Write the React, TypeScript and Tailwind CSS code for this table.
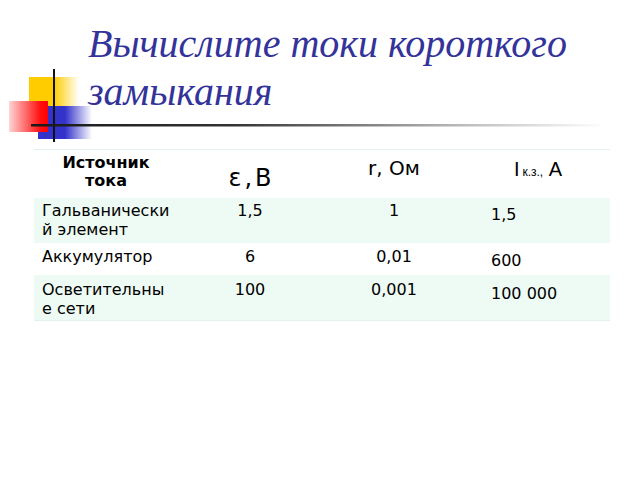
import React from 'react';

const rows = [
  { name: ['Гальванически', 'й элемент'], e: '1,5', r: '1', i: '1,5', h: 'h-[45px]', pt: 'pt-[3px]', pt4: 'pt-[7px]', bg: 'bg-[#eefbf4]' },
  { name: ['Аккумулятор'], e: '6', r: '0,01', i: '600', h: 'h-[32px]', pt: 'pt-[4px]', pt4: 'pt-[8px]', bg: 'bg-white' },
  { name: ['Осветительны', 'е сети'], e: '100', r: '0,001', i: '100 000', h: 'h-[45px]', pt: 'pt-[5px]', pt4: 'pt-[9px]', bg: 'bg-[#eefbf4]' },
];

function Decoration() {
  return (
    <svg className="absolute left-0 top-0" width="640" height="150" viewBox="0 0 640 150">
      <defs>
        <linearGradient id="yel" x1="0" x2="1" y1="0" y2="0">
          <stop offset="0" stopColor="#ffcc00" />
          <stop offset="0.5" stopColor="#ffcc00" />
          <stop offset="1" stopColor="#ffffff" />
        </linearGradient>
        <linearGradient id="red" x1="0" x2="1" y1="0" y2="0">
          <stop offset="0" stopColor="#ffd4d4" />
          <stop offset="0.8" stopColor="#ff1010" />
          <stop offset="1" stopColor="#ff0000" />
        </linearGradient>
        <linearGradient id="blu" x1="0" x2="1" y1="0" y2="0">
          <stop offset="0" stopColor="#3333cc" />
          <stop offset="0.5" stopColor="#3333cc" />
          <stop offset="1" stopColor="#ffffff" />
        </linearGradient>
        <linearGradient id="ln" x1="0" x2="1" y1="0" y2="0">
          <stop offset="0" stopColor="#1a1a1a" />
          <stop offset="0.35" stopColor="#333333" />
          <stop offset="0.75" stopColor="#bbbbbb" />
          <stop offset="1" stopColor="#ffffff" />
        </linearGradient>
      </defs>
      <rect x="29" y="77" width="50" height="30" fill="url(#yel)" />
      <rect x="38" y="106" width="54" height="33" fill="url(#blu)" />
      <rect x="9" y="101" width="39" height="31" fill="url(#red)" />
      <rect x="53" y="69" width="2" height="73" fill="#111111" />
      <rect x="31" y="124" width="575" height="2.5" fill="url(#ln)" />
    </svg>
  );
}

export default function App() {
  return (
    <div className="relative w-[640px] h-[480px] bg-white overflow-hidden font-['DejaVu_Sans',sans-serif] text-black">
      <Decoration />
      <h1 className="relative pt-[20px] pl-[88px] font-['Liberation_Serif',serif] italic font-normal text-[40px] leading-[48px] text-[#333399]">
        Вычислите токи короткого
        <br />
        замыкания
      </h1>

      <div className="relative ml-[34px] mt-[33px] w-[576px] border-t border-b border-[#e3f2ea]">
        <div className="flex h-[48px] bg-white">
          <div className="w-[144px] pt-[4px] text-center text-[16px] leading-[18px] font-bold">
            Источник
            <br />
            тока
          </div>
          <div className="w-[144px] pt-[14px] pl-[3px] text-center text-[24px] leading-[28px] tracking-[3px]">ε,B</div>
          <div className="w-[144px] pt-[6px] text-center text-[20px] leading-[24px]">r, Ом</div>
          <div className="w-[144px] pt-[7px] text-center text-[20px] leading-[24px] font-['Liberation_Sans',sans-serif]">
            I<span className="text-[12px] ml-[3px]">к.з.,</span> A
          </div>
        </div>
        {rows.map((row, idx) => (
          <div key={idx} className={`flex ${row.h} ${row.bg} text-[16px] leading-[19px]`}>
            <div className={`w-[144px] pl-[8px] ${row.pt}`}>
              {row.name.map((n, j) => (
                <div key={j}>{n}</div>
              ))}
            </div>
            <div className={`w-[144px] text-center ${row.pt}`}>{row.e}</div>
            <div className={`w-[144px] text-center ${row.pt}`}>{row.r}</div>
            <div className={`w-[144px] pl-[25px] ${row.pt4}`}>{row.i}</div>
          </div>
        ))}
      </div>
    </div>
  );
}
